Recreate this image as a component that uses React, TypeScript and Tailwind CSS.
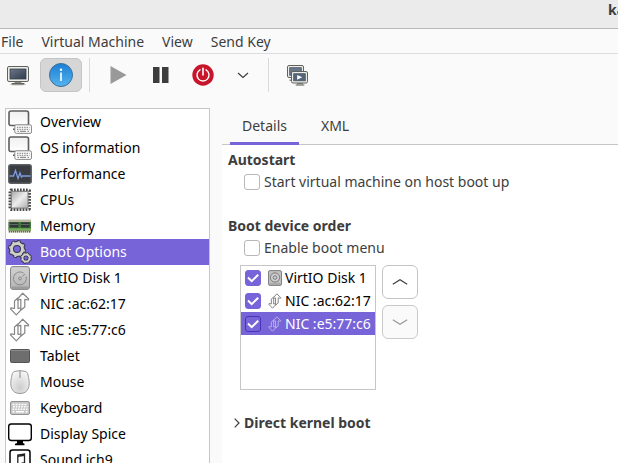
import { useState } from "react";
import type { ReactNode } from "react";

type IconProps = { size?: number; light?: boolean };

function MonitorIcon() {
  return (
    <svg width="24" height="24" viewBox="0 0 24 24" aria-hidden="true">
      <defs>
        <linearGradient id="screen" x1="0" y1="0" x2="1" y2="1">
          <stop offset="0" stopColor="#6c7785" />
          <stop offset="1" stopColor="#2f3c4e" />
        </linearGradient>
      </defs>
      <ellipse cx="12" cy="21.5" rx="8" ry="1" fill="#c9c9c7" />
      <path d="M8.500 18.500h7v2h-7z" fill="#888a85" />
      <rect x="5.500" y="20" width="13" height="1.500" rx=".7" fill="#60625e" />
      <rect x="1.500" y="3.500" width="21" height="15" rx="1.500" fill="#ededea" stroke="#60625e" />
      <rect x="4" y="6" width="16" height="10" fill="url(#screen)" stroke="#39424e" strokeWidth=".8" />
    </svg>
  );
}

function InfoIcon() {
  return (
    <svg width="26" height="26" viewBox="0 0 26 26" aria-hidden="true">
      <defs>
        <linearGradient id="info" x1="0" y1="0" x2="0" y2="1">
          <stop offset="0" stopColor="#1c7fd6" />
          <stop offset="1" stopColor="#55b4ee" />
        </linearGradient>
      </defs>
      <circle cx="13" cy="13" r="11.500" fill="url(#info)" stroke="#3d7099" />
      <rect x="12.200" y="10.500" width="1.600" height="8.500" fill="#fff" />
      <circle cx="13" cy="7.800" r="1.200" fill="#fff" />
    </svg>
  );
}

function PowerIcon() {
  return (
    <svg width="22" height="22" viewBox="0 0 22 22" aria-hidden="true">
      <circle cx="11" cy="11" r="10.700" fill="#c7162b" />
      <path d="M8 5.800a6 6 0 1 0 6 0" fill="none" stroke="#fff" strokeWidth="1.400" strokeLinecap="round" />
      <path d="M11 4.200v6.800" stroke="#fff" strokeWidth="1.600" strokeLinecap="round" />
    </svg>
  );
}

function ScreensIcon() {
  return (
    <svg width="24" height="24" viewBox="0 0 24 24" aria-hidden="true">
      <rect x="1.500" y="2.500" width="16" height="12" rx="1.500" fill="#ededea" stroke="#60625e" />
      <rect x="3.700" y="4.700" width="11.600" height="7.600" fill="#69778a" stroke="#4b5665" strokeWidth=".8" />
      <path d="M3.500 16.500h3.500v1.500H3.500z" fill="#888a85" />
      <path d="M11 20h6v1.500h-6z" fill="#888a85" />
      <rect x="9.500" y="21.300" width="9" height="1.400" rx=".7" fill="#8b8d88" />
      <rect x="5.500" y="8.500" width="16" height="11.500" rx="1.500" fill="#ededea" stroke="#60625e" />
      <rect x="7.700" y="10.700" width="11.600" height="7.100" fill="#56657a" stroke="#4b5665" strokeWidth=".8" />
      <path d="M11.200 11.900l5 2.400-5 2.400z" fill="#fff" />
    </svg>
  );
}

function ComputerIcon() {
  return (
    <svg width="24" height="24" viewBox="0 0 24 24" aria-hidden="true">
      <defs>
        <linearGradient id="panel" x1="0" y1="0" x2="0" y2="1">
          <stop offset="0" stopColor="#efefef" />
          <stop offset="1" stopColor="#fff" />
        </linearGradient>
      </defs>
      <rect x="1" y="1" width="19.500" height="14.500" rx="2" fill="url(#panel)" stroke="#5e5e5e" strokeWidth="1.600" />
      <path d="M8 15.500v4M5 19.300h3" stroke="#555" strokeWidth="1.600" />
      <rect x="6.800" y="14.800" width="16.700" height="8.600" rx="1.500" fill="#fafafa" stroke="#8a8a8a" />
      <path d="M9 17.300h12.500M9 19.300h12.500" stroke="#777" strokeDasharray="1.400 1" />
      <path d="M9.500 21.300h1.500M12 21.300h6M19.500 21.300h1.500" stroke="#777" />
    </svg>
  );
}

function PerformanceIcon() {
  return (
    <svg width="24" height="24" viewBox="0 0 24 24" aria-hidden="true">
      <rect x=".8" y="2.800" width="22.400" height="18.400" rx="2" fill="#393c40" stroke="#5d5f61" strokeWidth="1.500" />
      <path d="M1.500 14h4l2-5.500 2.500 8 2-5.500 1.500 4 1-1H22.500" fill="none" stroke="#7d9be0" strokeWidth="1.300" />
    </svg>
  );
}

function CpuIcon() {
  return (
    <svg width="24" height="24" viewBox="0 0 24 24" aria-hidden="true">
      <defs>
        <linearGradient id="cpu" x1="0" y1="0" x2="1" y2="1">
          <stop offset="0" stopColor="#a9a9a9" />
          <stop offset=".5" stopColor="#ededed" />
          <stop offset="1" stopColor="#acacac" />
        </linearGradient>
      </defs>
      <rect x="2" y="2" width="19.500" height="19.500" rx="1" fill="#d8d8d8" stroke="#4c4c4c" strokeWidth="3" strokeDasharray="1.700 1.300" />
      <rect x="3.500" y="3.500" width="16.500" height="16.500" rx="1" fill="url(#cpu)" stroke="#858585" />
    </svg>
  );
}

function MemoryIcon() {
  return (
    <svg width="24" height="24" viewBox="0 0 24 24" aria-hidden="true">
      <rect x=".5" y="5.500" width="22.500" height="13" fill="#b8b8a0" />
      <rect x=".5" y="8" width="22.500" height="8.500" fill="#3d7834" />
      <path d="M2 8.500h8.500v5H2zM13 8.500h8.500v5H13z" fill="#30363a" />
      <path d="M2 10.500h8.500M13 10.500h8.500" stroke="#5d6d62" />
      <path d="M1 15.200h22" stroke="#78ac5e" strokeWidth="1.800" />
      <path d="M1 17.700h22" stroke="#6a6842" strokeWidth="1.500" strokeDasharray="1 1" />
    </svg>
  );
}

function GearsIcon() {
  return (
    <svg width="24" height="24" viewBox="0 0 24 24" aria-hidden="true">
      <g fill="none">
        <circle cx="9" cy="9" r="7.200" stroke="#353448" strokeWidth="3.600" strokeDasharray="3.200 2.450" />
        <circle cx="9" cy="9" r="5.500" stroke="#353448" strokeWidth="5" />
        <circle cx="9" cy="9" r="7.200" stroke="#cfcfca" strokeWidth="1.700" strokeDasharray="2.200 3.450" strokeDashoffset="-.5" />
        <circle cx="9" cy="9" r="5.500" stroke="#cfcfca" strokeWidth="3" />
        <circle cx="18" cy="18" r="4.700" stroke="#353448" strokeWidth="2.400" strokeDasharray="2.200 1.490" />
        <circle cx="18" cy="18" r="3.500" stroke="#353448" strokeWidth="3.600" />
        <circle cx="18" cy="18" r="3.500" stroke="#cfcfca" strokeWidth="1.900" />
        <circle cx="18" cy="18" r="4.700" stroke="#cfcfca" strokeWidth="1" strokeDasharray="1.400 2.290" strokeDashoffset="-.4" />
      </g>
    </svg>
  );
}

function DiskIcon() {
  return (
    <svg width="24" height="24" viewBox="0 0 24 24" aria-hidden="true">
      <defs>
        <linearGradient id="disk" x1="0" y1="0" x2="0" y2="1">
          <stop offset="0" stopColor="#d2d2d2" />
          <stop offset="1" stopColor="#b4b4b4" />
        </linearGradient>
      </defs>
      <rect x="2.500" y=".6" width="19" height="22.800" rx="2.500" fill="url(#disk)" stroke="#858585" />
      <path d="M3.500 20.500h17v1.500q-1 1-2 1h-13q-1 0-2-1z" fill="#9c9c9c" />
      <path d="M15.500 7a6.500 6.500 0 1 0 2.600 3.500" fill="none" stroke="#8a8a8a" />
      <circle cx="12" cy="12.500" r="1.400" fill="none" stroke="#8a8a8a" />
      <path d="M14.500 10.300l2.500-2.300" stroke="#8a8a8a" />
    </svg>
  );
}

function SmallDiskIcon() {
  return (
    <svg width="16" height="16" viewBox="0 0 16 16" aria-hidden="true">
      <rect x="1.500" y=".6" width="13" height="14.800" rx="1.500" fill="#c0c0c0" stroke="#808080" />
      <path d="M2.500 13.500h11v1h-11z" fill="#969696" />
      <circle cx="8" cy="7.500" r="4.600" fill="#cecece" stroke="#7b7b7b" />
      <circle cx="8" cy="7.500" r="1.800" fill="none" stroke="#7b7b7b" />
    </svg>
  );
}

function NetworkIcon({ size = 24, light = false }: IconProps) {
  return (
    <svg width={size} height={size} viewBox="0 0 24 24" aria-hidden="true">
      <g
        fill={light ? "none" : "#fff"}
        stroke={light ? "#b9afe8" : "#858585"}
        strokeWidth={size < 20 ? 1.500 : 1.200}
        strokeLinejoin="round"
      >
        <path d="M6.500 9l3.500-3v10.500l3.500-.7.500 1-5.700 6-5.800-6 .5-1 3.500.7z" />
        <path d="M12.800 18V7.300l-3 .7-.3-1 5.200-5.800 6 5.800-.4 1-3.500-.7V15z" />
      </g>
    </svg>
  );
}

function TabletIcon() {
  return (
    <svg width="24" height="24" viewBox="0 0 24 24" aria-hidden="true">
      <rect x="2.500" y="5.500" width="19" height="13" rx="1" fill="#6e6e6e" stroke="#555" />
      <path d="M3 6.500h18" stroke="#8b8b8b" />
    </svg>
  );
}

function MouseIcon() {
  return (
    <svg width="24" height="24" viewBox="0 0 24 24" aria-hidden="true">
      <defs>
        <radialGradient id="mouse" cx=".5" cy=".75" r=".65">
          <stop offset="0" stopColor="#cdcdcd" />
          <stop offset="1" stopColor="#f2f2f2" />
        </radialGradient>
      </defs>
      <path
        d="M6 1.500Q12-.3 18 1.500Q20 2.300 20.500 7.500C22.500 16 20.500 23.500 12 23.500S1.500 16 3.500 7.500Q4 2.300 6 1.500z"
        fill="url(#mouse)"
        stroke="#999"
      />
      <path d="M12 1v7" stroke="#8a8a8a" />
    </svg>
  );
}

function KeyboardIcon() {
  return (
    <svg width="24" height="24" viewBox="0 0 24 24" aria-hidden="true">
      <rect x="2.500" y="5.500" width="19" height="13" rx="1.500" fill="#c6c6c6" stroke="#939393" />
      <path d="M4.500 8.500h15" stroke="#fff" strokeWidth="1.500" strokeDasharray="2 1" />
      <path d="M5 10.800h14.500M4.500 13.200h15" stroke="#fff" strokeWidth="1.500" strokeDasharray="1.700 1" />
      <path d="M4.500 15.800h2M8 15.800h8M17.500 15.800h2" stroke="#fff" strokeWidth="1.500" />
    </svg>
  );
}

function DisplayIcon() {
  return (
    <svg width="24" height="24" viewBox="0 0 24 24" aria-hidden="true">
      <rect x=".7" y="2" width="22.600" height="16.500" rx="2.500" fill="#fff" stroke="#000" strokeWidth="1.400" />
      <path d="M9 18.500h6v2.500l1.500.7v1.500h-9.500v-1.500L9 21z" fill="#000" />
    </svg>
  );
}

function SoundIcon() {
  return (
    <svg width="24" height="24" viewBox="0 0 24 24" aria-hidden="true">
      <rect x="2" y="2" width="20" height="20" rx="2.500" fill="#fff" stroke="#000" strokeWidth="1.500" />
      <path d="M9.800 16.500V7l6.700-1v9.500" fill="none" stroke="#222" strokeWidth="1.300" />
      <path d="M9.800 8.200l6.700-1" stroke="#222" strokeWidth="1.500" />
      <ellipse cx="8.300" cy="16.700" rx="1.900" ry="1.500" fill="#222" />
      <ellipse cx="15" cy="15.700" rx="1.900" ry="1.500" fill="#222" />
    </svg>
  );
}

function Chevron({ direction, color = "#3d3d3d" }: { direction: "up" | "down"; color?: string }) {
  return (
    <svg width="16" height="16" viewBox="0 0 16 16" fill="none" stroke={color} strokeWidth="1.200" aria-hidden="true">
      {direction === "up" ? <path d="M.8 10.200L8 5.800l7.200 4.400" /> : <path d="M.8 5.800L8 10.200l7.200-4.400" />}
    </svg>
  );
}

function CheckBox({ id, checked, onChange, selected = false }: { id: string; checked: boolean; onChange: () => void; selected?: boolean }) {
  return (
    <span className="relative flex size-4 shrink-0">
      <input
        id={id}
        type="checkbox"
        checked={checked}
        onChange={onChange}
        className={`size-4 appearance-none rounded-[3px] border bg-white ${
          selected
            ? "border-[#4b32b8] checked:bg-[#7764d8]"
            : "border-[#b8b8b8] checked:border-[#7764d8] checked:bg-[#7764d8]"
        }`}
      />
      {checked && (
        <svg className="pointer-events-none absolute inset-0" width="16" height="16" viewBox="0 0 16 16" aria-hidden="true">
          <path d="M3 7.500l3.700 3.700 6.500-6.500" fill="none" stroke="#fff" strokeWidth="2" />
        </svg>
      )}
    </span>
  );
}

const hardware: { name: string; icon: ReactNode }[] = [
  { name: "Overview", icon: <ComputerIcon /> },
  { name: "OS information", icon: <ComputerIcon /> },
  { name: "Performance", icon: <PerformanceIcon /> },
  { name: "CPUs", icon: <CpuIcon /> },
  { name: "Memory", icon: <MemoryIcon /> },
  { name: "Boot Options", icon: <GearsIcon /> },
  { name: "VirtIO Disk 1", icon: <DiskIcon /> },
  { name: "NIC :ac:62:17", icon: <NetworkIcon /> },
  { name: "NIC :e5:77:c6", icon: <NetworkIcon /> },
  { name: "Tablet", icon: <TabletIcon /> },
  { name: "Mouse", icon: <MouseIcon /> },
  { name: "Keyboard", icon: <KeyboardIcon /> },
  { name: "Display Spice", icon: <DisplayIcon /> },
  { name: "Sound ich9", icon: <SoundIcon /> },
];

const bootDevices = ["VirtIO Disk 1", "NIC :ac:62:17", "NIC :e5:77:c6"];

export default function App() {
  const [page, setPage] = useState("Boot Options");
  const [autostart, setAutostart] = useState(false);
  const [bootMenu, setBootMenu] = useState(false);
  const [enabled, setEnabled] = useState([true, true, true]);

  return (
    <div className="flex h-screen flex-col overflow-hidden bg-[#fafafa] font-['Noto_Sans','Open_Sans',sans-serif] text-sm leading-5 text-[#3d3d3d]">
      <header className="flex h-[29px] shrink-0 justify-end border-b border-[#b8b8b8] bg-[#ebebeb]">
        <h1 className="w-[10px] overflow-hidden font-bold">ka</h1>
      </header>

      <nav className="flex h-[25px] shrink-0 items-center gap-[18px] border-b border-[#dedede] px-px pt-0.5">
        {["File", "Virtual Machine", "View", "Send Key"].map((item) => (
          <button key={item} type="button" className="whitespace-nowrap">
            {item}
          </button>
        ))}
      </nav>

      <div className="flex h-[54px] shrink-0 items-start pt-1 pl-1">
        <div className="flex h-[34px] items-center">
          <button type="button" aria-label="Console" className="flex w-9 pl-0.5">
            <MonitorIcon />
          </button>
          <button
            type="button"
            aria-label="Details"
            className="flex h-[34px] w-[42px] items-center justify-center rounded-md border border-[#c4c4c4] bg-[#d6d6d6]"
          >
            <InfoIcon />
          </button>
          <span className="ml-[7px] h-full w-px bg-[#dadada]" />
          <button type="button" aria-label="Run" className="ml-5 flex">
            <svg width="17" height="18" viewBox="0 0 17 18" aria-hidden="true">
              <path d="M.5 0v18L16.500 9z" fill="#999" />
            </svg>
          </button>
          <button type="button" aria-label="Pause" className="ml-[25px] flex">
            <svg width="18" height="16" viewBox="0 0 18 16" aria-hidden="true">
              <path d="M1 0h6.500v16H1zM10 0h6.500v16H10z" fill="#3d3d3d" />
            </svg>
          </button>
          <button type="button" aria-label="Shut down" className="ml-[22px] flex">
            <PowerIcon />
          </button>
          <button type="button" aria-label="Shut down options" className="ml-[23px] flex w-3">
            <svg width="12" height="8" viewBox="0 0 12 8" aria-hidden="true">
              <path d="M1 2l5 4.500L11 2" fill="none" stroke="#3d3d3d" strokeWidth="1.200" />
            </svg>
          </button>
          <span className="ml-[19px] h-full w-px bg-[#dadada]" />
          <button type="button" aria-label="Snapshots" className="ml-[17px] flex">
            <ScreensIcon />
          </button>
        </div>
      </div>

      <div className="flex min-h-0 flex-1 gap-3 pl-[5px]">
        <ul className="w-[205px] shrink-0 overflow-hidden border border-b-0 border-[#c6c6c6] bg-white text-black">
          {hardware.map(({ name, icon }) => (
            <li key={name}>
              <button
                type="button"
                onClick={() => setPage(name)}
                className={`flex h-[26px] w-full items-center gap-2 px-0.5 text-left ${
                  name === page ? "bg-[#7764d8] text-white" : ""
                }`}
              >
                {icon}
                {name}
              </button>
            </li>
          ))}
        </ul>

        <main className="flex min-w-0 flex-1 flex-col">
          <div role="tablist" className="flex h-[37px] shrink-0 gap-2.5 border-b border-[#c6c6c6] pl-2">
            <button type="button" role="tab" aria-selected="true" className="-mb-px h-[37px] border-b-3 border-[#7764d8] px-3 pt-0.5">
              Details
            </button>
            <button type="button" role="tab" aria-selected="false" className="-mb-px h-[37px] border-b-3 border-transparent px-3 pt-0.5">
              XML
            </button>
          </div>

          <section className="flex flex-1 flex-col bg-white pt-[5px] pl-1.5">
            <h2 className="font-bold">Autostart</h2>
            <div className="mt-0.5 flex items-center gap-1 pl-4">
              <CheckBox id="autostart" checked={autostart} onChange={() => setAutostart(!autostart)} />
              <label htmlFor="autostart">Start virtual machine on host boot up</label>
            </div>

            <h2 className="mt-6 font-bold">Boot device order</h2>
            <div className="mt-0.5 flex items-center gap-1 pl-4">
              <CheckBox id="boot-menu" checked={bootMenu} onChange={() => setBootMenu(!bootMenu)} />
              <label htmlFor="boot-menu">Enable boot menu</label>
            </div>

            <div className="mt-[7px] flex gap-1.5 pl-3">
              <ul className="h-[125px] w-[136px] border border-[#c6c6c6] bg-white text-black">
                {bootDevices.map((device, i) => (
                  <li
                    key={device}
                    className={`flex h-[23px] items-center pl-1 ${i === 2 ? "bg-[#7764d8] text-white" : ""}`}
                  >
                    <CheckBox
                      id={`device-${i}`}
                      checked={enabled[i]}
                      selected={i === 2}
                      onChange={() => setEnabled(enabled.map((on, j) => (j === i ? !on : on)))}
                    />
                    <label htmlFor={`device-${i}`} className="ml-1.5 flex items-center gap-0.5 whitespace-nowrap">
                      {i === 0 ? <SmallDiskIcon /> : <NetworkIcon size={16} light={i === 2} />}
                      {device}
                    </label>
                  </li>
                ))}
              </ul>
              <div className="flex flex-col gap-1.5">
                <button
                  type="button"
                  aria-label="Move up"
                  className="flex h-[34px] w-9 items-center justify-center rounded-md border border-[#c4c4c4] bg-white"
                >
                  <Chevron direction="up" />
                </button>
                <button
                  type="button"
                  aria-label="Move down"
                  className="flex h-[34px] w-9 items-center justify-center rounded-md border border-[#c9c9c9] bg-[#fafafa]"
                >
                  <Chevron direction="down" color="#999" />
                </button>
              </div>
            </div>

            <button type="button" className="mt-[23px] flex items-center gap-1 pl-1.5 text-left font-bold">
              <svg width="6" height="10" viewBox="0 0 6 10" aria-hidden="true">
                <path d="M.7.700L5 5 .7 9.300" fill="none" stroke="#3d3d3d" strokeWidth="1.200" />
              </svg>
              Direct kernel boot
            </button>
          </section>
        </main>
      </div>
    </div>
  );
}
